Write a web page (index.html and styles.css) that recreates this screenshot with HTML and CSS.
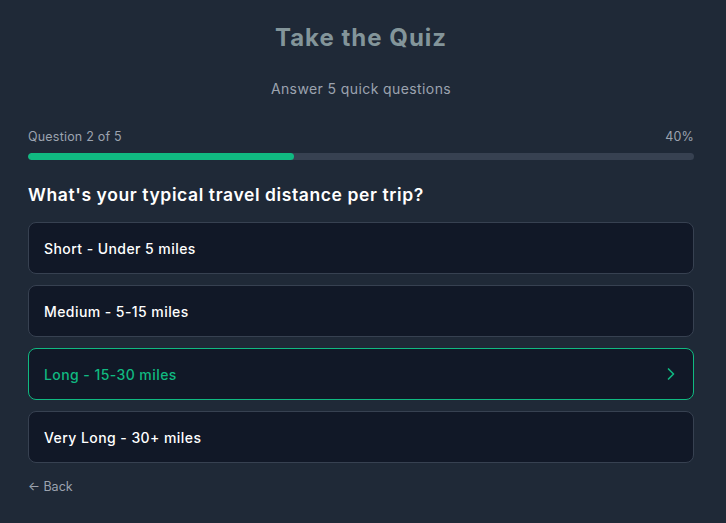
FILE: index.html
```html
<!DOCTYPE html>
<html lang="en">
<head>
<meta charset="utf-8">
<title>Take the Quiz</title>
<link rel="stylesheet" href="styles.css">
</head>
<body>
<main class="quiz">
  <header class="quiz-header">
    <h1 class="quiz-title">Take the Quiz</h1>
    <p class="quiz-subtitle">Answer 5 quick questions</p>
  </header>
  <section class="progress">
    <div class="progress-labels">
      <span>Question 2 of 5</span>
      <span>40%</span>
    </div>
    <div class="progress-track"><div class="progress-fill" style="width:40%"></div></div>
  </section>
  <h2 class="question">What's your typical travel distance per trip?</h2>
  <div class="options">
    <button class="option">Short - Under 5 miles</button>
    <button class="option">Medium - 5-15 miles</button>
    <button class="option option-selected">Long - 15-30 miles
      <svg class="chevron" viewBox="0 0 24 24" width="20" height="20" fill="none" stroke="currentColor" stroke-width="2" stroke-linecap="round" stroke-linejoin="round"><path d="m9 18 6-6-6-6"/></svg>
    </button>
    <button class="option">Very Long - 30+ miles</button>
  </div>
  <button class="back">← Back</button>
</main>
</body>
</html>
```
FILE: styles.css
```css
* { box-sizing: border-box; }
html, body { margin: 0; padding: 0; }
body {
  background: #1f2937;
  font-family: "Inter", "Noto Sans", sans-serif;
  color: #fff;
  width: 726px;
  height: 523px;
  overflow: hidden;
}
.quiz {
  padding: 22px 32px 0 28px;
  display: flex;
  flex-direction: column;
}
.quiz-header { text-align: center; }
.quiz-title {
  margin: 0;
  font-size: 24px;
  line-height: 32px;
  font-weight: 700;
  letter-spacing: 1px;
  color: #83959a;
}
.quiz-subtitle {
  margin: 25px 0 0;
  font-size: 14px;
  line-height: 20px;
  letter-spacing: 0.4px;
  color: #9ca3af;
}
.progress { margin-top: 29px; }
.progress-labels {
  display: flex;
  justify-content: space-between;
  font-size: 12.5px;
  line-height: 18px;
  letter-spacing: 0.2px;
  color: #9ca3af;
}
.progress-track {
  margin-top: 7px;
  height: 7px;
  border-radius: 4px;
  background: #374151;
  overflow: hidden;
}
.progress-fill {
  height: 100%;
  background: #10b981;
  border-radius: 4px;
}
.question {
  margin: 22px 0 0;
  font-size: 17.5px;
  line-height: 26px;
  font-weight: 600;
  letter-spacing: 0.6px;
  color: #fff;
}
.options {
  margin-top: 14px;
  display: flex;
  flex-direction: column;
  gap: 11px;
}
.option {
  display: flex;
  align-items: center;
  justify-content: space-between;
  height: 52px;
  padding: 0 12px 0 15px;
  background: #111827;
  border: 1px solid #374151;
  border-radius: 8px;
  font-family: inherit;
  font-size: 14px;
  font-weight: 500;
  letter-spacing: 0.43px;
  color: #fff;
  text-align: left;
}
.option-selected {
  border-color: #10b981;
  color: #10b981;
}
.chevron { flex: none; }
.back {
  align-self: flex-start;
  margin-top: 15px;
  padding: 0;
  background: none;
  border: none;
  font-family: inherit;
  font-size: 12.5px;
  line-height: 18px;
  color: #9ca3af;
}
```
